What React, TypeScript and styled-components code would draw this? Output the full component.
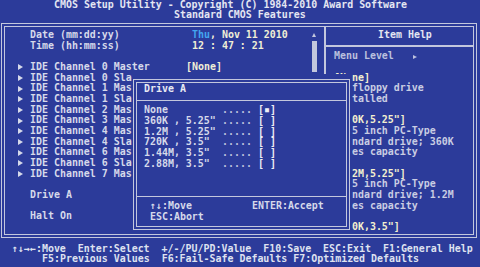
import styled, { createGlobalStyle } from "styled-components";

const ROW = 10.68;
const COL = 6;
const LINE = "#c3c7dd";
const BLUE = "#2c3b9a";

const GlobalStyle = createGlobalStyle`
  html, body { margin: 0; padding: 0; background: ${BLUE}; }
`;

const Screen = styled.div`
  position: relative;
  width: 480px;
  height: 267px;
  overflow: hidden;
  background: ${BLUE};
  color: #d6d9ea;
  font-family: "DejaVu Sans Mono", "Liberation Mono", monospace;
  font-weight: bold;
  font-size: 9.95px;
  line-height: ${ROW}px;
  white-space: pre;
`;

const Title = styled.header`
  color: #e4e6f2;
`;

const TitleLine = styled.div<{ $col: number; $first?: boolean }>`
  height: ${(p) => (p.$first ? ROW - 1 : ROW)}px;
  line-height: ${(p) => (p.$first ? ROW - 1 : ROW)}px;
  padding-left: ${(p) => p.$col * COL}px;
`;

const Frame = styled.main`
  display: flex;
  box-sizing: border-box;
  width: 476px;
  height: 215px;
  margin: 2.64px 0 0 1px;
  border: 4px double ${LINE};
`;

const LeftPanel = styled.section`
  display: flex;
  width: 319px;
  padding-top: 3px;
`;

const List = styled.div`
  width: 307px;
`;

const Row = styled.div`
  display: grid;
  grid-template-columns: 25px 156px 1fr;
  align-items: center;
  height: ${ROW}px;
`;

const Marker = styled.span`
  justify-self: start;
  margin-left: 13px;
  width: 0;
  height: 0;
  border-left: 5px solid #d6d9ea;
  border-top: 3px solid transparent;
  border-bottom: 3px solid transparent;
`;

const Value = styled.span<{ $inset?: boolean }>`
  padding-left: ${(p) => (p.$inset ? COL : 0)}px;
  color: #f1efd6;
`;

const Day = styled.span`
  color: #43a6f0;
`;

const Gap = styled.div<{ $rows: number }>`
  height: ${(p) => p.$rows * ROW}px;
`;

const ScrollTrack = styled.div`
  display: flex;
  flex-direction: column;
  width: 6px;
`;

const ScrollArrow = styled.span`
  width: 0;
  height: 0;
  margin: 3.5px 0 3px 0;
  border-bottom: 4px solid ${LINE};
  border-left: 2.5px solid transparent;
  border-right: 2.5px solid transparent;
`;

const ScrollThumb = styled.div`
  width: 5px;
  height: 31px;
  margin-top: 1px;
  background: ${LINE};
`;

const RightPanel = styled.aside`
  display: flex;
  flex-direction: column;
  flex: 1;
  padding-top: 3px;
  border-left: 2px solid ${LINE};
`;

const HelpTitle = styled.div`
  height: ${ROW}px;
  padding-left: 52px;
  color: #e4e6f2;
`;

const HelpRule = styled.div`
  height: 1.6px;
  margin: 4.6px 0 4.48px;
  background: ${LINE};
`;

const MenuLevel = styled.div`
  display: flex;
  align-items: center;
  height: ${ROW}px;
  padding-left: 8px;
  color: #bcc1de;
`;

const LevelArrow = styled.span`
  margin-left: 19px;
  width: 0;
  height: 0;
  border-left: 4px solid #bcc1de;
  border-top: 2.5px solid transparent;
  border-bottom: 2.5px solid transparent;
`;

const HelpLine = styled.div<{ $accent?: boolean }>`
  height: ${ROW}px;
  padding-left: 8px;
  color: ${(p) => (p.$accent ? "#f3f0cf" : "#c9cde3")};
`;

/* the dialog covers whole text cells; its frame is drawn inside them */
const Popup = styled.div`
  position: absolute;
  left: 132px;
  top: 73.8px;
  display: flex;
  box-sizing: border-box;
  width: 220px;
  height: 160.1px;
  padding: 5.2px 2px 4.4px 0.7px;
  background: ${BLUE};
`;

const PopupBox = styled.div`
  flex: 1;
  box-sizing: border-box;
  padding-top: 1.1px;
  border: 4px double ${LINE};
`;

const PopupTitle = styled.div`
  height: ${ROW}px;
  padding-left: 7.3px;
  color: #e8e9f3;
`;

const PopupRule = styled.div`
  height: 1.6px;
  margin: 4.9px 0 4.2px;
  background: ${LINE};
`;

const Option = styled.div`
  display: grid;
  grid-template-columns: 78px 36px auto;
  height: ${ROW}px;
  padding-left: 7.3px;
`;

const Dots = styled.span`
  color: #bcc1de;
`;

const Check = styled.span`
  color: #eeeef5;
`;

const PopupKeys = styled.div`
  display: grid;
  grid-template-columns: 102px auto;
  grid-auto-rows: ${ROW}px;
  padding-left: 13.3px;
`;

const Footer = styled.footer`
  margin-top: 5.72px;
`;

const FooterLine = styled.div<{ $col: number }>`
  height: ${ROW}px;
  padding-left: ${(p) => p.$col * COL}px;
  color: #dfe2f0;
`;

const channels = [
  "0 Master",
  "0 Slave",
  "1 Master",
  "1 Slave",
  "2 Master",
  "3 Master",
  "4 Master",
  "4 Slave",
  "6 Master",
  "6 Slave",
  "7 Master",
];

const options = [
  ["None", "[▪]"],
  ['360K , 5.25"', "[ ]"],
  ['1.2M , 5.25"', "[ ]"],
  ['720K , 3.5"', "[ ]"],
  ['1.44M, 3.5"', "[ ]"],
  ['2.88M, 3.5"', "[ ]"],
];

const help: [string, boolean][] = [
  ["[None]", true],
  ["No floppy drive", false],
  ["installed", false],
  ["", false],
  ['[360K,5.25"]', true],
  ["5.25 inch PC-Type", false],
  ["standard drive; 360K", false],
  ["bytes capacity", false],
  ["", false],
  ['[1.2M,5.25"]', true],
  ["5.25 inch PC-Type", false],
  ["standard drive; 1.2M", false],
  ["bytes capacity", false],
  ["", false],
  ['[720K,3.5"]', true],
];

export default function App() {
  return (
    <Screen>
      <GlobalStyle />
      <Title>
        <TitleLine $col={9} $first>
          CMOS Setup Utility - Copyright (C) 1984-2010 Award Software
        </TitleLine>
        <TitleLine $col={29}>Standard CMOS Features</TitleLine>
      </Title>

      <Frame>
        <LeftPanel>
          <List>
            <Row>
              <span />
              <span>Date (mm:dd:yy)</span>
              <Value $inset>
                <Day>Thu</Day>, Nov 11 2010
              </Value>
            </Row>
            <Row>
              <span />
              <span>Time (hh:mm:ss)</span>
              <Value $inset>12 : 47 : 21</Value>
            </Row>
            <Gap $rows={1} />
            {channels.map((c, i) => (
              <Row key={c}>
                <Marker />
                <span>IDE Channel {c}</span>
                {i === 0 && <Value>[None]</Value>}
              </Row>
            ))}
            <Gap $rows={1} />
            <Row>
              <span />
              <span>Drive A</span>
            </Row>
            <Gap $rows={1} />
            <Row>
              <span />
              <span>Halt On</span>
            </Row>
          </List>
          <ScrollTrack>
            <ScrollArrow />
            <ScrollThumb />
          </ScrollTrack>
        </LeftPanel>

        <RightPanel>
          <HelpTitle>Item Help</HelpTitle>
          <HelpRule />
          <MenuLevel>
            Menu Level
            <LevelArrow />
          </MenuLevel>
          <Gap $rows={1} />
          {help.map(([text, accent], i) => (
            <HelpLine key={i} $accent={accent}>
              {text}
            </HelpLine>
          ))}
        </RightPanel>
      </Frame>

      <Popup>
        <PopupBox>
          <PopupTitle>Drive A</PopupTitle>
          <PopupRule />
          {options.map(([label, mark]) => (
            <Option key={label}>
              <span>{label}</span>
              <Dots>.....</Dots>
              <Check>{mark}</Check>
            </Option>
          ))}
          <Gap $rows={2} />
          <PopupRule />
          <PopupKeys>
            <span>↑↓:Move</span>
            <span>ENTER:Accept</span>
            <span>ESC:Abort</span>
          </PopupKeys>
        </PopupBox>
      </Popup>

      <Footer>
        <FooterLine $col={2}>↑↓→←:Move  Enter:Select  +/-/PU/PD:Value  F10:Save  ESC:Exit  F1:General Help</FooterLine>
        <FooterLine $col={7}>F5:Previous Values  F6:Fail-Safe Defaults F7:Optimized Defaults</FooterLine>
      </Footer>
    </Screen>
  );
}
